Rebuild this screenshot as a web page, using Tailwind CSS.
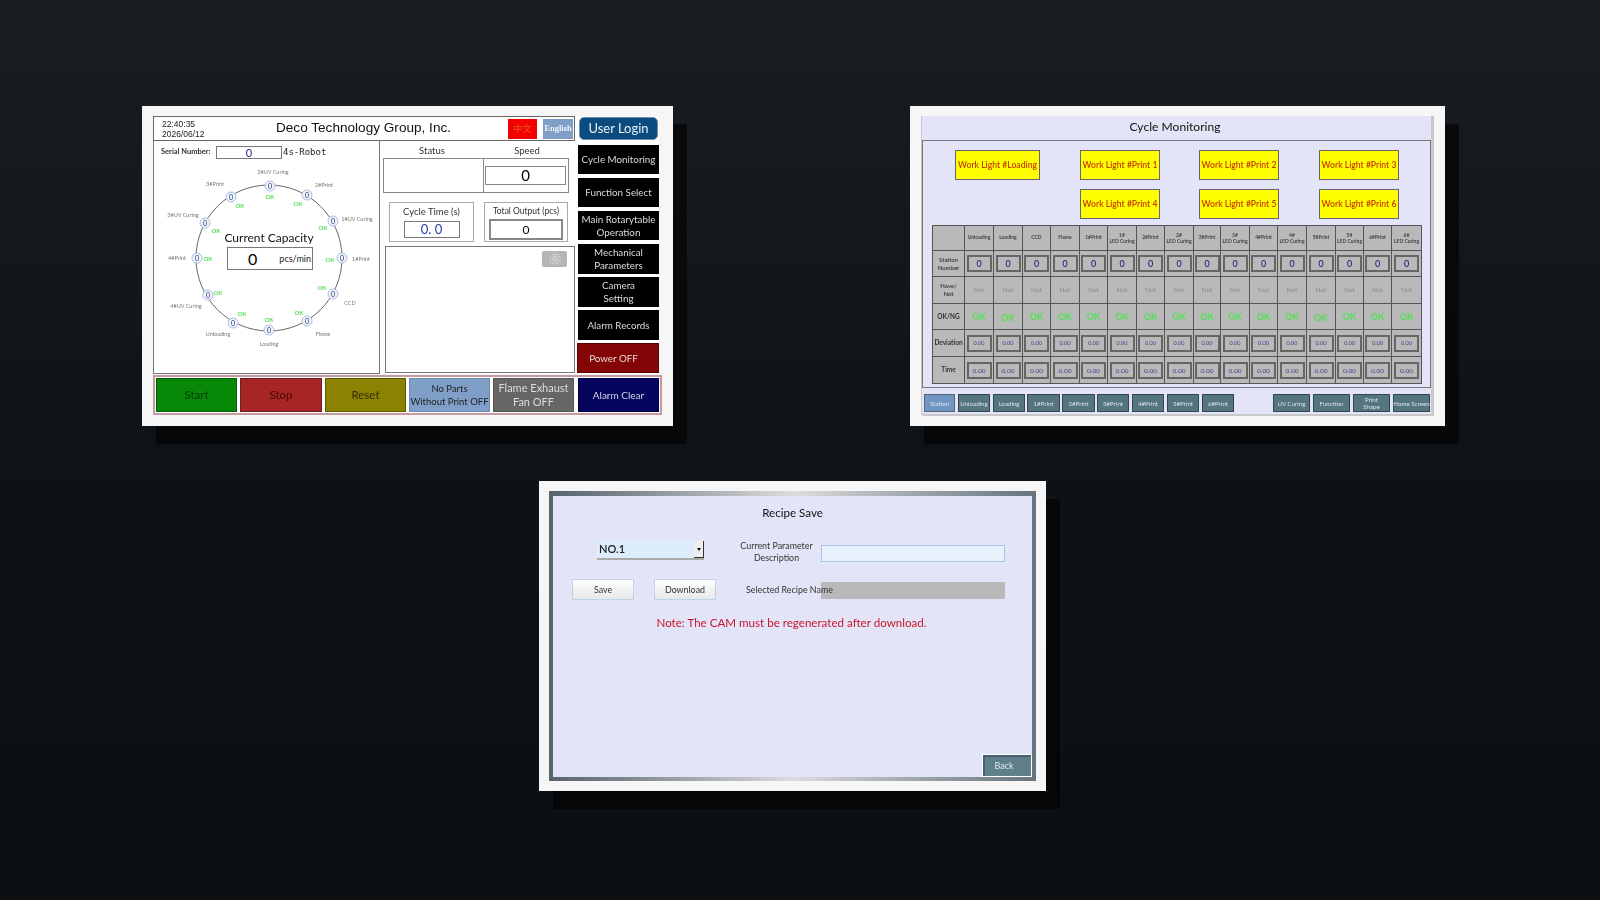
<!DOCTYPE html>
<html lang="en"><head><meta charset="utf-8"><title>Deco HMI</title>
<script src="https://cdn.jsdelivr.net/npm/@tailwindcss/browser@4"></script></head>
<body class="m-0 w-[1600px] h-[900px] overflow-hidden bg-linear-to-b from-[#1a1e22] via-[#0f1317] to-[#0b0f12] font-['Lato',sans-serif] text-black">
<main class="pt-[106px] flex flex-col blur-[0.35px]">
<div class="flex pl-[142px]">

<!-- CARD 1 -->
<section class="w-[531px] h-[320px] bg-[#f6f6f6] shadow-[14px_18px_0_rgba(0,0,0,0.6)] pt-[10px] pl-[11px] shrink-0">
 <div class="flex">
  <div class="w-[422px] bg-white">
   <header class="h-[25px] border border-[#666] flex items-center pl-[8px] pr-[1px] font-['Liberation_Sans',sans-serif]">
    <div class="text-[8.5px] leading-[10px] text-[#222] w-[60px] shrink-0">22:40:35<br>2026/06/12</div>
    <div class="w-[283px] shrink-0 text-[13.6px] text-center text-[#111]">Deco Technology Group, Inc.</div>
    <div class="w-[29px] h-[20px] ml-[3px] bg-[#f40000] text-[#e05a20] text-[9px] flex items-center justify-center font-['Noto_Sans_CJK_SC',sans-serif]">中文</div>
    <div class="w-[30px] h-[20px] ml-[6px] bg-[#7f9fc9] text-[#eef2f8] text-[8.5px] font-bold flex items-center justify-center font-['Liberation_Serif',serif]">English</div>
   </header>
   <div class="flex h-[233px]">
    <div class="relative w-[227px] h-[233px] shadow-[inset_1px_0_0_#777,inset_-1px_0_0_#777,inset_0_-1px_0_#777]">
     <div class="absolute left-[8px] top-[6px] text-[7.5px] font-bold text-[#333] leading-[10px]">Serial Number:</div>
     <div class="absolute left-[63px] top-[5px] w-[66px] h-[13px] border border-[#777] text-[#22228a] text-[11px] leading-[11px] text-center">0</div>
     <div class="absolute left-[130px] top-[5px] text-[9px] leading-[12px] text-[#222] font-['DejaVu_Sans_Mono',monospace]">4s-Robot</div>
     <svg class="absolute left-0 top-0" width="227" height="233" fill="none"><circle cx="116" cy="117" r="73" stroke="#666" stroke-width="1"/></svg>

     <span class="absolute left-[120px] top-[31px] -translate-x-1/2 -translate-y-1/2 text-[5.5px] text-[#777] whitespace-nowrap">2#UV Curing</span>
     <span class="absolute left-[171px] top-[44px] -translate-x-1/2 -translate-y-1/2 text-[5.5px] text-[#777] whitespace-nowrap">2#Print</span>
     <span class="absolute left-[204px] top-[78px] -translate-x-1/2 -translate-y-1/2 text-[5.5px] text-[#777] whitespace-nowrap">1#UV Curing</span>
     <span class="absolute left-[208px] top-[118px] -translate-x-1/2 -translate-y-1/2 text-[5.5px] text-[#777] whitespace-nowrap">1#Print</span>
     <span class="absolute left-[197px] top-[162px] -translate-x-1/2 -translate-y-1/2 text-[5.5px] text-[#777] whitespace-nowrap">CCD</span>
     <span class="absolute left-[170px] top-[193px] -translate-x-1/2 -translate-y-1/2 text-[5.5px] text-[#777] whitespace-nowrap">Flame</span>
     <span class="absolute left-[116px] top-[203px] -translate-x-1/2 -translate-y-1/2 text-[5.5px] text-[#777] whitespace-nowrap">Loading</span>
     <span class="absolute left-[65px] top-[193px] -translate-x-1/2 -translate-y-1/2 text-[5.5px] text-[#777] whitespace-nowrap">Unloading</span>
     <span class="absolute left-[33px] top-[165px] -translate-x-1/2 -translate-y-1/2 text-[5.5px] text-[#777] whitespace-nowrap">4#UV Curing</span>
     <span class="absolute left-[24px] top-[117px] -translate-x-1/2 -translate-y-1/2 text-[5.5px] text-[#777] whitespace-nowrap">4#Print</span>
     <span class="absolute left-[30px] top-[74px] -translate-x-1/2 -translate-y-1/2 text-[5.5px] text-[#777] whitespace-nowrap">3#UV Curing</span>
     <span class="absolute left-[62px] top-[43px] -translate-x-1/2 -translate-y-1/2 text-[5.5px] text-[#777] whitespace-nowrap">3#Print</span>

     <span class="absolute left-[117px] top-[55px] -translate-x-1/2 -translate-y-1/2 text-[6px] font-bold text-[#58dc58]">OK</span>
     <span class="absolute left-[145px] top-[62px] -translate-x-1/2 -translate-y-1/2 text-[6px] font-bold text-[#58dc58]">OK</span>
     <span class="absolute left-[170px] top-[86px] -translate-x-1/2 -translate-y-1/2 text-[6px] font-bold text-[#58dc58]">OK</span>
     <span class="absolute left-[177px] top-[118px] -translate-x-1/2 -translate-y-1/2 text-[6px] font-bold text-[#58dc58]">OK</span>
     <span class="absolute left-[169px] top-[146px] -translate-x-1/2 -translate-y-1/2 text-[6px] font-bold text-[#58dc58]">OK</span>
     <span class="absolute left-[146px] top-[171px] -translate-x-1/2 -translate-y-1/2 text-[6px] font-bold text-[#58dc58]">OK</span>
     <span class="absolute left-[116px] top-[178px] -translate-x-1/2 -translate-y-1/2 text-[6px] font-bold text-[#58dc58]">OK</span>
     <span class="absolute left-[89px] top-[172px] -translate-x-1/2 -translate-y-1/2 text-[6px] font-bold text-[#58dc58]">OK</span>
     <span class="absolute left-[65px] top-[151px] -translate-x-1/2 -translate-y-1/2 text-[6px] font-bold text-[#58dc58]">OK</span>
     <span class="absolute left-[55px] top-[117px] -translate-x-1/2 -translate-y-1/2 text-[6px] font-bold text-[#58dc58]">OK</span>
     <span class="absolute left-[63px] top-[89px] -translate-x-1/2 -translate-y-1/2 text-[6px] font-bold text-[#58dc58]">OK</span>
     <span class="absolute left-[87px] top-[64px] -translate-x-1/2 -translate-y-1/2 text-[6px] font-bold text-[#58dc58]">OK</span>

     <span class="absolute left-[189px] top-[117px] -translate-x-1/2 -translate-y-1/2 w-[11px] h-[11px] rounded-full border border-[#a9bfdc] bg-[#eef3fa] text-[7px] leading-[9px] text-center text-[#26307a]">0</span>
     <span class="absolute left-[180px] top-[153px] -translate-x-1/2 -translate-y-1/2 w-[11px] h-[11px] rounded-full border border-[#a9bfdc] bg-[#eef3fa] text-[7px] leading-[9px] text-center text-[#26307a]">0</span>
     <span class="absolute left-[154px] top-[180px] -translate-x-1/2 -translate-y-1/2 w-[11px] h-[11px] rounded-full border border-[#a9bfdc] bg-[#eef3fa] text-[7px] leading-[9px] text-center text-[#26307a]">0</span>
     <span class="absolute left-[116px] top-[189px] -translate-x-1/2 -translate-y-1/2 w-[11px] h-[11px] rounded-full border border-[#a9bfdc] bg-[#eef3fa] text-[7px] leading-[9px] text-center text-[#26307a]">0</span>
     <span class="absolute left-[80px] top-[182px] -translate-x-1/2 -translate-y-1/2 w-[11px] h-[11px] rounded-full border border-[#a9bfdc] bg-[#eef3fa] text-[7px] leading-[9px] text-center text-[#26307a]">0</span>
     <span class="absolute left-[55px] top-[154px] -translate-x-1/2 -translate-y-1/2 w-[11px] h-[11px] rounded-full border border-[#a9bfdc] bg-[#eef3fa] text-[7px] leading-[9px] text-center text-[#26307a]">0</span>
     <span class="absolute left-[44px] top-[117px] -translate-x-1/2 -translate-y-1/2 w-[11px] h-[11px] rounded-full border border-[#a9bfdc] bg-[#eef3fa] text-[7px] leading-[9px] text-center text-[#26307a]">0</span>
     <span class="absolute left-[52px] top-[82px] -translate-x-1/2 -translate-y-1/2 w-[11px] h-[11px] rounded-full border border-[#a9bfdc] bg-[#eef3fa] text-[7px] leading-[9px] text-center text-[#26307a]">0</span>
     <span class="absolute left-[78px] top-[56px] -translate-x-1/2 -translate-y-1/2 w-[11px] h-[11px] rounded-full border border-[#a9bfdc] bg-[#eef3fa] text-[7px] leading-[9px] text-center text-[#26307a]">0</span>
     <span class="absolute left-[117px] top-[45px] -translate-x-1/2 -translate-y-1/2 w-[11px] h-[11px] rounded-full border border-[#a9bfdc] bg-[#eef3fa] text-[7px] leading-[9px] text-center text-[#26307a]">0</span>
     <span class="absolute left-[154px] top-[54px] -translate-x-1/2 -translate-y-1/2 w-[11px] h-[11px] rounded-full border border-[#a9bfdc] bg-[#eef3fa] text-[7px] leading-[9px] text-center text-[#26307a]">0</span>
     <span class="absolute left-[180px] top-[80px] -translate-x-1/2 -translate-y-1/2 w-[11px] h-[11px] rounded-full border border-[#a9bfdc] bg-[#eef3fa] text-[7px] leading-[9px] text-center text-[#26307a]">0</span>

     <div class="absolute left-[116px] top-[97px] -translate-x-1/2 -translate-y-1/2 text-[12px] whitespace-nowrap text-[#111]">Current Capacity</div>
     <div class="absolute left-[74px] top-[106px] w-[86px] h-[23px] border border-[#777] bg-white flex items-center justify-between pr-[1px] pl-[20px]">
      <span class="text-[16px] leading-none">0</span><span class="text-[9px] text-[#222]">pcs/min</span>
     </div>
    </div>

    <div class="w-[195px] h-[233px] pt-[3px] flex flex-col">
     <div class="flex text-[9.5px] text-[#333] h-[14px] leading-[14px]">
      <div class="w-[102px] text-center pl-[2px]">Status</div><div class="w-[88px] text-center pl-[2px]">Speed</div>
     </div>
     <div class="flex w-[186px] h-[35px] ml-[3px] border border-[#888]">
      <div class="w-[100px] border-r border-[#888]"></div>
      <div class="pl-[1px] pt-[7px]"><div class="w-[81px] h-[19px] border border-[#888] text-[15px] leading-[17px] text-center">0</div></div>
     </div>
     <div class="flex mt-[9px] ml-[9px]">
      <div class="w-[85px] h-[40px] border border-[#aaa] flex flex-col items-center pt-[3px]">
       <div class="text-[9.5px] leading-[12px] text-[#333]">Cycle Time (s)</div>
       <div class="w-[56px] h-[17px] mt-[3px] border border-[#777] text-[13px] leading-[15px] text-center text-[#2440a8]">0. 0</div>
      </div>
      <div class="w-[84px] h-[40px] ml-[10px] border border-[#aaa] flex flex-col items-center pt-[3px]">
       <div class="text-[8.5px] leading-[11px] text-[#333]">Total Output (pcs)</div>
       <div class="w-[74px] h-[21px] mt-[2px] border-2 border-[#888] text-[12px] leading-[17px] text-center">0</div>
      </div>
     </div>
     <div class="relative w-[190px] h-[127px] mt-[4px] ml-[5px] border border-[#777]">
      <div class="absolute right-[7px] top-[4px] w-[25px] h-[16px] rounded-[2px] bg-[#b5b5b5] flex items-center justify-center">
       <svg width="12" height="12" viewBox="0 0 12 12" fill="none" stroke="#d6d6d6"><circle cx="6" cy="6" r="5"/><circle cx="6" cy="6" r="2.8"/><circle cx="6" cy="6" r="1" fill="#d6d6d6"/></svg>
      </div>
     </div>
    </div>
   </div>
  </div>

  <nav class="w-[84px] bg-white pl-[3px] flex flex-col text-[#dcdcdc] text-[9.8px] leading-[13px] text-center">
   <div class="w-[79px] h-[23px] ml-[1px] mt-[1px] rounded-[5px] border border-[#6d8fb0] bg-[#0b4b7e] text-[#e8f0f8] text-[13px] leading-[21px]">User Login</div>
   <div class="w-[81px] h-[29px] mt-[5px] bg-black flex items-center justify-center">Cycle Monitoring</div>
   <div class="w-[81px] h-[29px] mt-[4px] bg-black flex items-center justify-center">Function Select</div>
   <div class="w-[81px] h-[29px] mt-[4px] bg-black flex items-center justify-center">Main Rotarytable<br>Operation</div>
   <div class="w-[81px] h-[30px] mt-[4px] bg-black flex items-center justify-center">Mechanical<br>Parameters</div>
   <div class="w-[81px] h-[30px] mt-[3px] bg-black flex items-center justify-center">Camera<br>Setting</div>
   <div class="w-[81px] h-[30px] mt-[3px] bg-black flex items-center justify-center">Alarm Records</div>
   <div class="w-[82px] h-[30px] mt-[3px] -ml-[1px] pr-[9px] bg-[#840505] border border-[#5c0000] flex items-center justify-center text-[#e8d8d0]">Power OFF</div>
  </nav>
 </div>

 <div class="w-[509px] h-[40px] mt-[1px] border-2 border-[#c79aa0] bg-white flex items-center gap-[3px] pl-[1px] text-[11px] leading-[14px] text-center">
  <div class="w-[81px] h-[34px] bg-[#078907] border border-[#0c5a0c] text-[#033a0a] text-[11.5px] flex items-center justify-center">Start</div>
  <div class="w-[82px] h-[34px] bg-[#a82525] border border-[#6a2020] text-[#480606] text-[11.5px] flex items-center justify-center">Stop</div>
  <div class="w-[81px] h-[34px] bg-[#8a8200] border border-[#5e5a00] text-[#2f2e05] text-[11.5px] flex items-center justify-center">Reset</div>
  <div class="w-[81px] h-[34px] bg-[#7f9fc9] border border-[#6f8cb0] text-[#222] text-[9.5px] leading-[13px] flex items-center justify-center whitespace-nowrap">No Parts<br>Without Print OFF</div>
  <div class="w-[81px] h-[34px] bg-[#666] border border-[#555] text-[#ddd] flex items-center justify-center">Flame Exhaust<br>Fan OFF</div>
  <div class="w-[81px] h-[34px] ml-[1px] bg-[#05055f] border border-[#000040] text-[#d0d4e8] text-[10px] flex items-center justify-center">Alarm Clear</div>
 </div>
</section>

<!-- CARD 2 -->
<section class="w-[535px] h-[320px] ml-[237px] bg-[#f6f6f6] shadow-[14px_18px_0_rgba(0,0,0,0.6)] pt-[10px] pl-[11px] shrink-0">
 <div class="w-[513px] h-[300px] bg-[#e4e4f8] border-l border-r-[3px] border-[#c8c8c8] border-b-2 flex flex-col rounded-bl-[3px]">
  <h2 class="h-[25px] border-b border-[#777] text-[12.1px] leading-[21px] text-center font-normal text-[#111] pr-[3px]">Cycle Monitoring</h2>
  <div class="h-[247px] w-[509px] border-x border-b border-[#777] pt-[9px] pl-[9px] flex flex-col">
   <div class="flex text-[8.6px] text-[#c53b00] text-center font-semibold">
    <div class="flex flex-col items-start w-[148px]">
     <div class="ml-[23px] w-[85px] h-[30px] bg-[#ffff00] border border-[#666] flex items-center justify-center whitespace-nowrap">Work Light #Loading</div>
    </div>
    <div class="flex flex-col gap-[9px] w-[119px]">
     <div class="w-[80px] h-[30px] bg-[#ffff00] border border-[#666] flex items-center justify-center whitespace-nowrap">Work Light #Print 1</div>
     <div class="w-[80px] h-[30px] bg-[#ffff00] border border-[#666] flex items-center justify-center whitespace-nowrap">Work Light #Print 4</div>
    </div>
    <div class="flex flex-col gap-[9px] w-[120px]">
     <div class="w-[80px] h-[30px] bg-[#ffff00] border border-[#666] flex items-center justify-center whitespace-nowrap">Work Light #Print 2</div>
     <div class="w-[80px] h-[30px] bg-[#ffff00] border border-[#666] flex items-center justify-center whitespace-nowrap">Work Light #Print 5</div>
    </div>
    <div class="flex flex-col gap-[9px]">
     <div class="w-[80px] h-[30px] bg-[#ffff00] border border-[#666] flex items-center justify-center whitespace-nowrap">Work Light #Print 3</div>
     <div class="w-[80px] h-[30px] bg-[#ffff00] border border-[#666] flex items-center justify-center whitespace-nowrap">Work Light #Print 6</div>
    </div>
   </div>

   <div class="mt-[6px] w-[490px] h-[159px] bg-[#b9b9b9] border-t border-l border-[#555] grid grid-cols-[32px_29px_29px_28px_29px_28px_29px_28px_29px_27px_29px_28px_29px_29px_28px_28px_30px] grid-rows-[25px_26px_27px_26px_27px_27px] text-center [&>*]:border-r [&>*]:border-b [&>*]:border-[#555] [&>*]:flex [&>*]:items-center [&>*]:justify-center">
    <div></div>
    <div class="text-[5px] font-bold text-[#444]">Unloading</div><div class="text-[5px] font-bold text-[#444]">Loading</div><div class="text-[5px] font-bold text-[#444]">CCD</div><div class="text-[5px] font-bold text-[#444]">Flame</div><div class="text-[5px] font-bold text-[#444]">1#Print</div><div class="text-[5px] font-bold text-[#444] leading-[6px]">1#<br>LED Curing</div><div class="text-[5px] font-bold text-[#444]">2#Print</div><div class="text-[5px] font-bold text-[#444] leading-[6px]">2#<br>LED Curing</div><div class="text-[5px] font-bold text-[#444]">3#Print</div><div class="text-[5px] font-bold text-[#444] leading-[6px]">3#<br>LED Curing</div><div class="text-[5px] font-bold text-[#444]">4#Print</div><div class="text-[5px] font-bold text-[#444] leading-[6px]">4#<br>LED Curing</div><div class="text-[5px] font-bold text-[#444]">5#Print</div><div class="text-[5px] font-bold text-[#444] leading-[6px]">5#<br>LED Curing</div><div class="text-[5px] font-bold text-[#444]">6#Print</div><div class="text-[5px] font-bold text-[#444] leading-[6px]">6#<br>LED Curing</div>

    <div class="text-[6px] leading-[8px] text-[#333] font-semibold">Station<br>Number</div>
    <div><span class="w-[25px] h-[17px] border-2 border-[#666] text-[9px] leading-[13px] font-semibold text-[#2a2a80]">0</span></div><div><span class="w-[25px] h-[17px] border-2 border-[#666] text-[9px] leading-[13px] font-semibold text-[#2a2a80]">0</span></div><div><span class="w-[25px] h-[17px] border-2 border-[#666] text-[9px] leading-[13px] font-semibold text-[#2a2a80]">0</span></div><div><span class="w-[25px] h-[17px] border-2 border-[#666] text-[9px] leading-[13px] font-semibold text-[#2a2a80]">0</span></div><div><span class="w-[25px] h-[17px] border-2 border-[#666] text-[9px] leading-[13px] font-semibold text-[#2a2a80]">0</span></div><div><span class="w-[25px] h-[17px] border-2 border-[#666] text-[9px] leading-[13px] font-semibold text-[#2a2a80]">0</span></div><div><span class="w-[25px] h-[17px] border-2 border-[#666] text-[9px] leading-[13px] font-semibold text-[#2a2a80]">0</span></div><div><span class="w-[25px] h-[17px] border-2 border-[#666] text-[9px] leading-[13px] font-semibold text-[#2a2a80]">0</span></div><div><span class="w-[25px] h-[17px] border-2 border-[#666] text-[9px] leading-[13px] font-semibold text-[#2a2a80]">0</span></div><div><span class="w-[25px] h-[17px] border-2 border-[#666] text-[9px] leading-[13px] font-semibold text-[#2a2a80]">0</span></div><div><span class="w-[25px] h-[17px] border-2 border-[#666] text-[9px] leading-[13px] font-semibold text-[#2a2a80]">0</span></div><div><span class="w-[25px] h-[17px] border-2 border-[#666] text-[9px] leading-[13px] font-semibold text-[#2a2a80]">0</span></div><div><span class="w-[25px] h-[17px] border-2 border-[#666] text-[9px] leading-[13px] font-semibold text-[#2a2a80]">0</span></div><div><span class="w-[25px] h-[17px] border-2 border-[#666] text-[9px] leading-[13px] font-semibold text-[#2a2a80]">0</span></div><div><span class="w-[25px] h-[17px] border-2 border-[#666] text-[9px] leading-[13px] font-semibold text-[#2a2a80]">0</span></div><div><span class="w-[25px] h-[17px] border-2 border-[#666] text-[9px] leading-[13px] font-semibold text-[#2a2a80]">0</span></div>

    <div class="text-[6px] leading-[8px] text-[#333] font-semibold">Have/<br>Not</div>
    <div class="text-[6.5px] text-[#8c8c8c]">Not</div><div class="text-[6.5px] text-[#8c8c8c]">Not</div><div class="text-[6.5px] text-[#8c8c8c]">Not</div><div class="text-[6.5px] text-[#8c8c8c]">Not</div><div class="text-[6.5px] text-[#8c8c8c]">Not</div><div class="text-[6.5px] text-[#8c8c8c]">Not</div><div class="text-[6.5px] text-[#8c8c8c]">Not</div><div class="text-[6.5px] text-[#8c8c8c]">Not</div><div class="text-[6.5px] text-[#8c8c8c]">Not</div><div class="text-[6.5px] text-[#8c8c8c]">Not</div><div class="text-[6.5px] text-[#8c8c8c]">Not</div><div class="text-[6.5px] text-[#8c8c8c]">Not</div><div class="text-[6.5px] text-[#8c8c8c]">Not</div><div class="text-[6.5px] text-[#8c8c8c]">Not</div><div class="text-[6.5px] text-[#8c8c8c]">Not</div><div class="text-[6.5px] text-[#8c8c8c]">Not</div>

    <div class="text-[6.5px] font-bold text-[#333]">OK/NG</div>
    <div class="text-[9px] font-bold text-[#55e055]">OK</div><div class="text-[9px] font-bold text-[#55e055] pt-[2px]">OK</div><div class="text-[9px] font-bold text-[#55e055]">OK</div><div class="text-[9px] font-bold text-[#55e055]">OK</div><div class="text-[9px] font-bold text-[#55e055]">OK</div><div class="text-[9px] font-bold text-[#55e055]">OK</div><div class="text-[9px] font-bold text-[#55e055]">OK</div><div class="text-[9px] font-bold text-[#55e055]">OK</div><div class="text-[9px] font-bold text-[#55e055]">OK</div><div class="text-[9px] font-bold text-[#55e055]">OK</div><div class="text-[9px] font-bold text-[#55e055]">OK</div><div class="text-[9px] font-bold text-[#55e055]">OK</div><div class="text-[9px] font-bold text-[#55e055] pt-[2px]">OK</div><div class="text-[9px] font-bold text-[#55e055]">OK</div><div class="text-[9px] font-bold text-[#55e055]">OK</div><div class="text-[9px] font-bold text-[#55e055]">OK</div>

    <div class="text-[6.5px] font-bold text-[#333]">Deviation</div>
    <div><span class="w-[25px] h-[17px] border-2 border-[#666] text-[5.5px] leading-[13px] text-[#44448c]">0.00</span></div><div><span class="w-[25px] h-[17px] border-2 border-[#666] text-[5.5px] leading-[13px] text-[#44448c]">0.00</span></div><div><span class="w-[25px] h-[17px] border-2 border-[#666] text-[5.5px] leading-[13px] text-[#44448c]">0.00</span></div><div><span class="w-[25px] h-[17px] border-2 border-[#666] text-[5.5px] leading-[13px] text-[#44448c]">0.00</span></div><div><span class="w-[25px] h-[17px] border-2 border-[#666] text-[5.5px] leading-[13px] text-[#44448c]">0.00</span></div><div><span class="w-[25px] h-[17px] border-2 border-[#666] text-[5.5px] leading-[13px] text-[#44448c]">0.00</span></div><div><span class="w-[25px] h-[17px] border-2 border-[#666] text-[5.5px] leading-[13px] text-[#44448c]">0.00</span></div><div><span class="w-[25px] h-[17px] border-2 border-[#666] text-[5.5px] leading-[13px] text-[#44448c]">0.00</span></div><div><span class="w-[25px] h-[17px] border-2 border-[#666] text-[5.5px] leading-[13px] text-[#44448c]">0.00</span></div><div><span class="w-[25px] h-[17px] border-2 border-[#666] text-[5.5px] leading-[13px] text-[#44448c]">0.00</span></div><div><span class="w-[25px] h-[17px] border-2 border-[#666] text-[5.5px] leading-[13px] text-[#44448c]">0.00</span></div><div><span class="w-[25px] h-[17px] border-2 border-[#666] text-[5.5px] leading-[13px] text-[#44448c]">0.00</span></div><div><span class="w-[25px] h-[17px] border-2 border-[#666] text-[5.5px] leading-[13px] text-[#44448c]">0.00</span></div><div><span class="w-[25px] h-[17px] border-2 border-[#666] text-[5.5px] leading-[13px] text-[#44448c]">0.00</span></div><div><span class="w-[25px] h-[17px] border-2 border-[#666] text-[5.5px] leading-[13px] text-[#44448c]">0.00</span></div><div><span class="w-[25px] h-[17px] border-2 border-[#666] text-[5.5px] leading-[13px] text-[#44448c]">0.00</span></div>

    <div class="text-[6.5px] font-bold text-[#333]">Time</div>
    <div><span class="w-[25px] h-[17px] border-2 border-[#666] text-[6.5px] leading-[13px] text-[#44448c]">0.00</span></div><div><span class="w-[25px] h-[17px] border-2 border-[#666] text-[6.5px] leading-[13px] text-[#44448c]">0.00</span></div><div><span class="w-[25px] h-[17px] border-2 border-[#666] text-[6.5px] leading-[13px] text-[#44448c]">0.00</span></div><div><span class="w-[25px] h-[17px] border-2 border-[#666] text-[6.5px] leading-[13px] text-[#44448c]">0.00</span></div><div><span class="w-[25px] h-[17px] border-2 border-[#666] text-[6.5px] leading-[13px] text-[#44448c]">0.00</span></div><div><span class="w-[25px] h-[17px] border-2 border-[#666] text-[6.5px] leading-[13px] text-[#44448c]">0.00</span></div><div><span class="w-[25px] h-[17px] border-2 border-[#666] text-[6.5px] leading-[13px] text-[#44448c]">0.00</span></div><div><span class="w-[25px] h-[17px] border-2 border-[#666] text-[6.5px] leading-[13px] text-[#44448c]">0.00</span></div><div><span class="w-[25px] h-[17px] border-2 border-[#666] text-[6.5px] leading-[13px] text-[#44448c]">0.00</span></div><div><span class="w-[25px] h-[17px] border-2 border-[#666] text-[6.5px] leading-[13px] text-[#44448c]">0.00</span></div><div><span class="w-[25px] h-[17px] border-2 border-[#666] text-[6.5px] leading-[13px] text-[#44448c]">0.00</span></div><div><span class="w-[25px] h-[17px] border-2 border-[#666] text-[6.5px] leading-[13px] text-[#44448c]">0.00</span></div><div><span class="w-[25px] h-[17px] border-2 border-[#666] text-[6.5px] leading-[13px] text-[#44448c]">0.00</span></div><div><span class="w-[25px] h-[17px] border-2 border-[#666] text-[6.5px] leading-[13px] text-[#44448c]">0.00</span></div><div><span class="w-[25px] h-[17px] border-2 border-[#666] text-[6.5px] leading-[13px] text-[#44448c]">0.00</span></div><div><span class="w-[25px] h-[17px] border-2 border-[#666] text-[6.5px] leading-[13px] text-[#44448c]">0.00</span></div>
   </div>
  </div>
  <div class="flex pl-[2px] pt-[6px] text-[6.2px] leading-[7px] text-[#d8e4e8] text-center">
   <div class="w-[31px] h-[18px] bg-[#6f95c4] border border-[#566] flex items-center justify-center">Station</div>
   <div class="w-[32px] h-[18px] ml-[3px] bg-[#55757e] border border-[#345] flex items-center justify-center">Unloading</div>
   <div class="w-[32px] h-[18px] ml-[3px] bg-[#55757e] border border-[#345] flex items-center justify-center">Loading</div>
   <div class="w-[33px] h-[18px] ml-[2px] bg-[#55757e] border border-[#345] flex items-center justify-center">1#Print</div>
   <div class="w-[33px] h-[18px] ml-[2px] bg-[#55757e] border border-[#345] flex items-center justify-center">2#Print</div>
   <div class="w-[32px] h-[18px] ml-[2px] bg-[#55757e] border border-[#345] flex items-center justify-center">3#Print</div>
   <div class="w-[32px] h-[18px] ml-[3px] bg-[#55757e] border border-[#345] flex items-center justify-center">4#Print</div>
   <div class="w-[32px] h-[18px] ml-[3px] bg-[#55757e] border border-[#345] flex items-center justify-center">5#Print</div>
   <div class="w-[32px] h-[18px] ml-[3px] bg-[#55757e] border border-[#345] flex items-center justify-center">6#Print</div>
   <div class="w-[37px] h-[18px] ml-[39px] bg-[#55757e] border border-[#345] flex items-center justify-center">UV Curing</div>
   <div class="w-[37px] h-[18px] ml-[3px] bg-[#55757e] border border-[#345] flex items-center justify-center">Function</div>
   <div class="w-[37px] h-[18px] ml-[3px] bg-[#55757e] border border-[#345] flex items-center justify-center">Print<br>Shape</div>
   <div class="w-[37px] h-[18px] ml-[3px] bg-[#55757e] border border-[#345] flex items-center justify-center whitespace-nowrap">Home Screen</div>
  </div>
 </div>
</section>
</div>

<!-- CARD 3 -->
<section class="w-[507px] h-[310px] ml-[539px] mt-[55px] bg-[#f6f6f6] shadow-[14px_18px_0_rgba(0,0,0,0.6)] pt-[10px] pl-[10px]">
 <div class="w-[487px] h-[290px] bg-linear-to-r from-[#56626c] via-[#dcdcdc] to-[#66747f] pt-[5px] px-[4px] pb-[4px]">
  <div class="h-full bg-[#e4e4f8] flex flex-col">
   <h2 class="mt-[9px] h-[16px] text-[11.6px] leading-[16px] text-center font-normal text-[#111]">Recipe Save</h2>
   <div class="flex mt-[20px] h-[24px] items-start">
    <div class="ml-[44px] w-[107px] h-[19px] bg-[#ddecfd] border-b-2 border-[#aaa] flex justify-between items-stretch text-[11px] font-semibold text-[#222] pl-[2px] leading-[16px]">
     <span>NO.1</span><span class="w-[10px] bg-[#eee] border-r border-b border-[#333] flex items-center justify-center"><span class="w-0 h-0 border-x-[2px] border-x-transparent border-t-[3px] border-t-black"></span></span>
    </div>
    <div class="w-[89px] ml-[28px] text-[8.9px] leading-[12px] text-center text-[#333] mt-[-1px] whitespace-nowrap">Current Parameter<br>Description</div>
    <div class="w-[184px] h-[17px] mt-[4px] bg-[#e8f2fc] border border-[#a6c4e4]"></div>
   </div>
   <div class="flex mt-[14px] items-start relative">
    <div class="ml-[19px] w-[62px] h-[21px] bg-linear-to-b from-white to-[#e8e8e8] border border-[#c0d4e8] text-[8.9px] leading-[19px] text-center text-[#333]">Save</div>
    <div class="ml-[20px] w-[62px] h-[21px] bg-linear-to-b from-white to-[#e8e8e8] border border-[#c0d4e8] text-[8.9px] leading-[19px] text-center text-[#333]">Download</div>
    <div class="ml-[105px] w-[184px] h-[17px] mt-[3px] bg-[#b9b9b9]"></div>
    <div class="absolute left-[193px] top-[4px] text-[8.9px] leading-[13px] text-[#333] whitespace-nowrap">Selected Recipe Name</div>
   </div>
   <p class="mt-[15px] pr-[2px] text-[11.6px] leading-[16px] text-center text-[#c5172c]">Note: The CAM must be regenerated after download.</p>
   <div class="mt-auto ml-auto mr-[1px] mb-[1px] w-[48px] h-[21px] pr-[8px] bg-[#5f7f8a] border-t-2 border-l-2 border-[#44606a] outline outline-1 outline-white text-[9px] leading-[18px] text-center text-[#dfe8ea]">Back</div>
  </div>
 </div>
</section>
</main>
</body></html>
